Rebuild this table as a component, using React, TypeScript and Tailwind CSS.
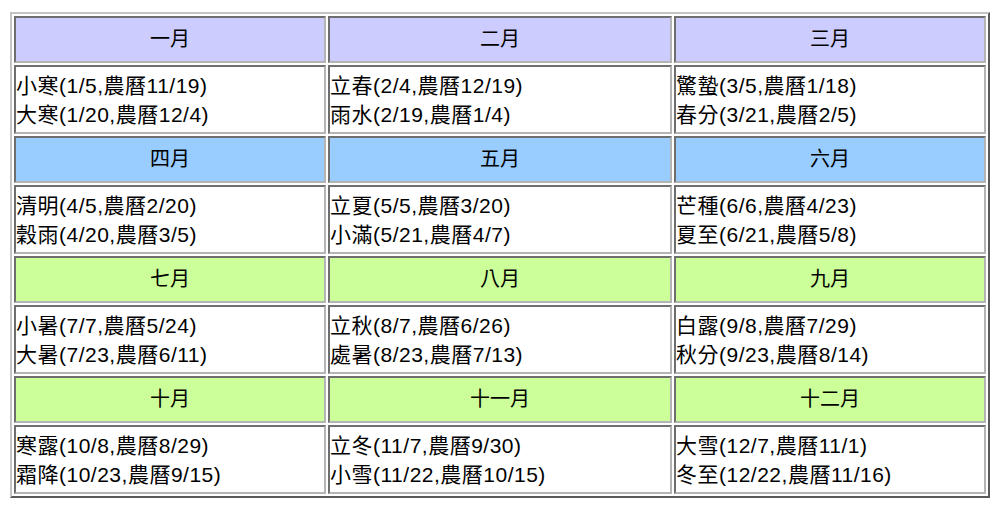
import React from 'react';

const months = [
  { name: '一月', bg: 'bg-[#ccccff]', terms: ['小寒(1/5,農曆11/19)', '大寒(1/20,農曆12/4)'] },
  { name: '二月', bg: 'bg-[#ccccff]', terms: ['立春(2/4,農曆12/19)', '雨水(2/19,農曆1/4)'] },
  { name: '三月', bg: 'bg-[#ccccff]', terms: ['驚蟄(3/5,農曆1/18)', '春分(3/21,農曆2/5)'] },
  { name: '四月', bg: 'bg-[#99ccff]', terms: ['清明(4/5,農曆2/20)', '穀雨(4/20,農曆3/5)'] },
  { name: '五月', bg: 'bg-[#99ccff]', terms: ['立夏(5/5,農曆3/20)', '小滿(5/21,農曆4/7)'] },
  { name: '六月', bg: 'bg-[#99ccff]', terms: ['芒種(6/6,農曆4/23)', '夏至(6/21,農曆5/8)'] },
  { name: '七月', bg: 'bg-[#ccff99]', terms: ['小暑(7/7,農曆5/24)', '大暑(7/23,農曆6/11)'] },
  { name: '八月', bg: 'bg-[#ccff99]', terms: ['立秋(8/7,農曆6/26)', '處暑(8/23,農曆7/13)'] },
  { name: '九月', bg: 'bg-[#ccff99]', terms: ['白露(9/8,農曆7/29)', '秋分(9/23,農曆8/14)'] },
  { name: '十月', bg: 'bg-[#ccff99]', terms: ['寒露(10/8,農曆8/29)', '霜降(10/23,農曆9/15)'] },
  { name: '十一月', bg: 'bg-[#ccff99]', terms: ['立冬(11/7,農曆9/30)', '小雪(11/22,農曆10/15)'] },
  { name: '十二月', bg: 'bg-[#ccff99]', terms: ['大雪(12/7,農曆11/1)', '冬至(12/22,農曆11/16)'] },
];

// inset cell border, like an old border=1 table
const cell = 'border-2 border-t-[#6e6e6e] border-l-[#6e6e6e] border-b-[#b4b4b4] border-r-[#b4b4b4]';

export default function App() {
  const rows = [0, 1, 2, 3].map((r) => months.slice(r * 3, r * 3 + 3));

  return (
    <div className="w-[1000px] h-[510px] bg-white pt-[12px] pl-[10px] text-black text-[20px] leading-[29px] font-['Liberation_Sans','Noto_Sans_CJK_TC',sans-serif]">
      <div className="w-[980px] grid grid-cols-[312px_344px_312px] gap-[2px] p-[2px] border-2 border-t-[#c4c4c4] border-l-[#c4c4c4] border-b-[#5a5a5a] border-r-[#5a5a5a]">
        {rows.map((row) => (
          <React.Fragment key={row[0].name}>
            {row.map((m) => (
              <div key={m.name} className={`${cell} ${m.bg} h-[47px] flex items-center justify-center`}>
                {m.name}
              </div>
            ))}
            {row.map((m) => (
              <div key={m.name + '-terms'} className={`${cell} h-[69px] flex flex-col justify-center text-[21px] tracking-[0.5px]`}>
                {m.terms.map((t) => (
                  <div key={t} className="whitespace-nowrap">{t}</div>
                ))}
              </div>
            ))}
          </React.Fragment>
        ))}
      </div>
    </div>
  );
}
